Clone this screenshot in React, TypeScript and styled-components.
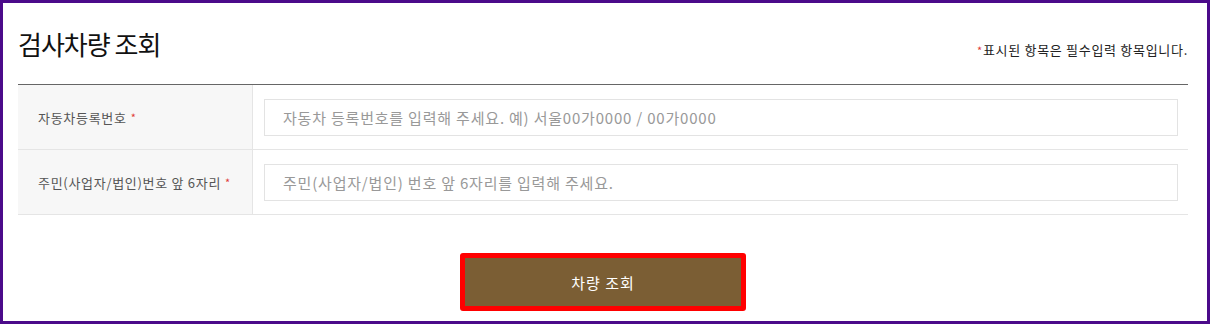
import styled, { createGlobalStyle } from "styled-components";

const GlobalStyle = createGlobalStyle`
  html, body {
    margin: 0;
    padding: 0;
    background: #fff;
  }
  body {
    font-family: "Noto Sans CJK KR", "Noto Sans", sans-serif;
  }
`;

const Frame = styled.div`
  box-sizing: border-box;
  width: 1210px;
  height: 324px;
  border: 3px solid #4b0a8a;
  padding: 24px 19px 0 15px;
  background: #fff;
`;

const Header = styled.div`
  display: flex;
  justify-content: space-between;
  align-items: flex-end;
  padding-bottom: 23px;
`;

const Title = styled.h2`
  margin: 0;
  font-size: 26px;
  line-height: 34px;
  font-weight: 400;
  color: #111;
  letter-spacing: -1px;
`;

const Note = styled.p`
  margin: 0 0 3px;
  font-size: 13px;
  line-height: 16px;
  color: #222;
  letter-spacing: 0.7px;
`;

const Star = styled.span`
  color: #e03a3a;
  font-size: 11px;
`;

const Table = styled.div`
  border-top: 1px solid #666;
`;

const Row = styled.div`
  display: flex;
  height: 65px;
  box-sizing: border-box;
  border-bottom: 1px solid #e5e5e5;
`;

const Label = styled.div`
  box-sizing: border-box;
  width: 235px;
  flex-shrink: 0;
  display: flex;
  align-items: center;
  gap: 4px;
  padding-left: 20px;
  background: #f7f7f7;
  border-right: 1px solid #e5e5e5;
  font-size: 13px;
  color: #555;
  letter-spacing: 0.7px;
`;

const Cell = styled.div`
  flex: 1;
  display: flex;
  align-items: center;
  padding: 0 10px 0 11px;
`;

const Input = styled.input`
  box-sizing: border-box;
  width: 100%;
  height: 37px;
  border: 1px solid #e3e3e3;
  padding: 0 18px;
  font-family: "Noto Sans CJK KR", "Noto Sans", sans-serif;
  font-size: 15px;
  letter-spacing: 0.8px;
  color: #333;
  outline: none;
  &::placeholder {
    color: #999;
  }
`;

const Actions = styled.div`
  display: flex;
  justify-content: center;
  padding-top: 38px;
`;

const SubmitButton = styled.button`
  box-sizing: border-box;
  width: 286px;
  height: 58px;
  border: 5px solid #ff0000;
  border-radius: 3px;
  background: #7b5e34;
  color: #fff;
  font-family: "Noto Sans CJK KR", "Noto Sans", sans-serif;
  font-size: 15px;
  letter-spacing: 1px;
  cursor: pointer;
`;

const fields = [
  {
    label: "자동차등록번호",
    placeholder: "자동차 등록번호를 입력해 주세요. 예) 서울00가0000 / 00가0000",
  },
  {
    label: "주민(사업자/법인)번호 앞 6자리",
    placeholder: "주민(사업자/법인) 번호 앞 6자리를 입력해 주세요.",
  },
];

const App = () => {
  return (
    <>
      <GlobalStyle />
      <Frame>
        <Header>
          <Title>검사차량 조회</Title>
          <Note>
            <Star>*</Star>표시된 항목은 필수입력 항목입니다.
          </Note>
        </Header>
        <Table>
          {fields.map((f) => (
            <Row key={f.label}>
              <Label>
                {f.label} <Star>*</Star>
              </Label>
              <Cell>
                <Input placeholder={f.placeholder} />
              </Cell>
            </Row>
          ))}
        </Table>
        <Actions>
          <SubmitButton>차량 조회</SubmitButton>
        </Actions>
      </Frame>
    </>
  );
};

export default App;
